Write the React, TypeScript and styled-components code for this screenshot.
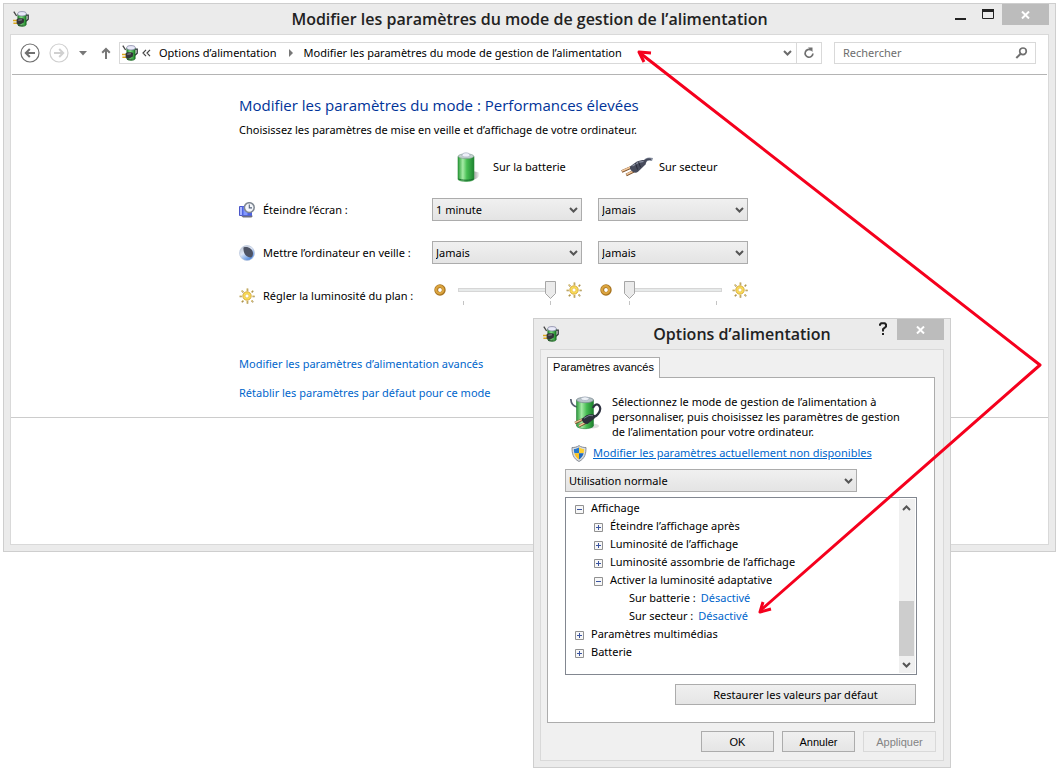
import React, { useId, useState } from 'react';
import styled, { createGlobalStyle, css } from 'styled-components';

const uiFont = '"Noto Sans", "Open Sans", sans-serif';
const titleFont = '"Open Sans", "Noto Sans", sans-serif';
const dialogFont = '"Liberation Sans", Arial, sans-serif';

const GlobalStyle = createGlobalStyle`
  *, *::before, *::after { box-sizing: border-box; }
  body {
    margin: 0;
    background: #fff;
    color: #000;
    font-family: ${uiFont};
    font-size: 11px;
    line-height: 18px;
  }
  button, input, select { font: inherit; color: inherit; margin: 0; border-radius: 0; }
  h1, h2, p, ul { margin: 0; padding: 0; }
  ul { list-style: none; }
  svg { display: block; flex: none; }
`;

/* ---------- Window frame ---------- */

const Desktop = styled.div`
  position: relative;
  min-height: 100vh;
  padding: 3px 2px 3px 3px;
`;

const frame = css`
  display: flex;
  flex-direction: column;
  padding: 0 6px 6px;
  border: 1px solid #cecece;
  background: #ebebeb;
`;

const MainWindow = styled.main`
  ${frame}
`;

const DialogWindow = styled.section`
  ${frame}
  position: absolute;
  left: 533px;
  top: 318px;
  width: 418px;
`;

const TitleBar = styled.header`
  display: grid;
  grid-template-columns: 1fr auto 1fr;
  height: 30px;
`;

const TitleIcon = styled.span`
  padding: 7px 0 0 3px;
`;

const WindowTitle = styled.h1`
  color: #222;
  font-family: ${titleFont};
  font-size: 16px;
  font-weight: 600;
  line-height: 30px;
  white-space: nowrap;
`;

const Controls = styled.div`
  display: flex;
  justify-content: flex-end;
  align-items: flex-start;
`;

const ControlButton = styled.button<{ $width?: number; $close?: boolean }>`
  display: flex;
  align-items: center;
  justify-content: center;
  width: ${(p) => p.$width ?? 28}px;
  height: ${(p) => (p.$close ? 21 : 19)}px;
  padding: 0;
  border: 0;
  background: ${(p) => (p.$close ? '#bcbcbc' : 'transparent')};
`;

const Client = styled.div<{ $tinted?: boolean }>`
  border: 1px solid #d9d9d9;
  background: ${(p) => (p.$tinted ? '#f0f0f0' : '#fff')};
`;

/* ---------- Navigation bar ---------- */

const Toolbar = styled.nav`
  display: flex;
  align-items: center;
  margin: 0 1px;
  padding: 7px 11px 10px 8px;
  border-bottom: 1px solid #b4b4b4;
`;

const IconButton = styled.button<{ $width?: number }>`
  display: flex;
  flex: none;
  align-items: center;
  justify-content: center;
  width: ${(p) => p.$width ?? 20}px;
  height: 20px;
  padding: 0;
  border: 0;
  background: none;
`;

const HistoryButtons = styled.div`
  display: flex;
  gap: 9px;
`;

const NavMenu = styled.div`
  display: flex;
  gap: 3px;
  margin: 0 3px 0 4px;
`;

const AddressBar = styled.div`
  display: flex;
  flex: 1;
  align-items: center;
  min-width: 0;
  height: 22px;
  border: 1px solid #d9d9d9;
  padding-left: 2px;
`;

const Crumbs = styled.div`
  display: flex;
  flex: 1;
  align-items: center;
  gap: 8px;
  min-width: 0;
  padding-left: 4px;
  overflow: hidden;
  white-space: nowrap;
`;

const Crumb = styled.a`
  color: #000;
  text-decoration: none;
`;

const CrumbSeparator = styled.span`
  padding: 0 2px;
`;

const RefreshCell = styled.div`
  display: flex;
  align-items: center;
  height: 20px;
  border-left: 1px solid #d9d9d9;
`;

const SearchBox = styled.label`
  display: flex;
  align-items: center;
  width: 202px;
  height: 22px;
  margin-left: 12px;
  padding: 0 7px 0 8px;
  border: 1px solid #d9d9d9;
`;

const SearchInput = styled.input`
  flex: 1;
  min-width: 0;
  padding: 0;
  border: 0;
  outline: 0;
  background: none;
  &::placeholder { color: #6d6d6d; opacity: 1; }
`;

/* ---------- Power plan page ---------- */

const Page = styled.div`
  padding: 18px 16px 14px 228px;
  border-bottom: 1px solid #ccc;
`;

const PageBottom = styled.div`
  height: 126px;
`;

const Heading = styled.h2`
  color: #003399;
  font-family: ${titleFont};
  font-size: 15px;
  font-weight: 400;
  line-height: 24px;
`;

const Intro = styled.p`
  margin-top: 3px;
  line-height: 20px;
`;

const Settings = styled.div`
  display: grid;
  grid-template-columns: 177px 150px 150px;
  grid-template-rows: 42px;
  grid-auto-rows: 43px;
  column-gap: 16px;
  align-items: center;
  margin-top: 6px;
`;

const SourceHead = styled.div`
  display: flex;
  align-items: center;
  gap: 6px;
  padding-left: 23px;
`;

const SettingLabel = styled.div`
  display: flex;
  align-items: center;
  gap: 8px;
  white-space: nowrap;
`;

const LinkList = styled.div`
  display: flex;
  flex-direction: column;
  align-items: flex-start;
  gap: 9px;
  margin-top: 37px;
`;

const Link = styled.a<{ $underlined?: boolean }>`
  color: #0066cc;
  line-height: 20px;
  text-decoration: ${(p) => (p.$underlined ? 'underline' : 'none')};
`;

/* ---------- Form controls ---------- */

const SelectBox = styled.div<{ $width: number }>`
  display: grid;
  grid-template-columns: 1fr 17px;
  align-items: center;
  width: ${(p) => p.$width}px;
  height: 23px;
  border: 1px solid #acacac;
  background: linear-gradient(#f0f0f0, #e4e4e4);
  svg { grid-area: 1 / 2; pointer-events: none; z-index: 1; margin-left: 5px; }
`;

const NativeSelect = styled.select`
  grid-area: 1 / 1 / 2 / 3;
  height: 21px;
  padding: 0 18px 0 3px;
  border: 0;
  background: none;
  appearance: none;
`;

const PushButton = styled.button<{ $width: number; $classic?: boolean }>`
  width: ${(p) => p.$width}px;
  height: 21px;
  padding: 0;
  border: 1px solid #acacac;
  background: linear-gradient(#f0f0f0, #e5e5e5);
  font-family: ${(p) => (p.$classic ? dialogFont : uiFont)};
  line-height: 18px;
  &:disabled {
    border-color: #d9d9d9;
    background: #efefef;
    color: #838383;
  }
`;

const SliderCell = styled.div`
  display: flex;
  align-items: flex-start;
  align-self: start;
  padding: 7px 0 0 2px;
`;

const SliderMark = styled.span<{ $end?: boolean }>`
  padding-top: ${(p) => (p.$end ? 1 : 3)}px;
`;

const SliderBody = styled.div`
  position: relative;
  width: 98px;
  height: 24px;
  margin: 0 10px 0 12px;
`;

const Range = styled.input`
  display: block;
  width: 100%;
  height: 18px;
  background: none;
  appearance: none;
  &::-webkit-slider-runnable-track {
    height: 4px;
    border: 1px solid #d6d6d6;
    background: #e7eaea;
  }
  &::-webkit-slider-thumb {
    appearance: none;
    width: 11px;
    height: 18px;
    margin-top: -8px;
    opacity: 0;
  }
`;

const Thumb = styled.svg`
  position: absolute;
  top: 0;
  pointer-events: none;
`;

const Ticks = styled.div`
  display: flex;
  height: 4px;
  margin: 2px 5px 0;
  border: solid #c4c4c4;
  border-width: 0 1px;
`;

/* ---------- Dialog ---------- */

const DialogClient = styled(Client)`
  padding: 7px 7px 8px 6px;
`;

const Tab = styled.button`
  position: relative;
  display: block;
  width: 113px;
  height: 21px;
  margin-bottom: -1px;
  padding: 0 0 2px;
  border: 1px solid #acacac;
  border-bottom: 0;
  background: #fff;
  font-family: ${dialogFont};
`;

const TabPanel = styled.div`
  display: flex;
  flex-direction: column;
  margin-right: 1px;
  padding: 16px 17px 17px;
  border: 1px solid #acacac;
  background: #fff;
`;

const Summary = styled.div`
  display: flex;
  gap: 10px;
  padding-left: 5px;
  line-height: 15px;
  white-space: nowrap;
`;

const UnlockRow = styled.div`
  display: flex;
  align-items: center;
  gap: 6px;
  height: 18px;
  margin: 5px 0 7px;
  padding-left: 6px;
`;

const TreeBox = styled.div`
  display: flex;
  height: 178px;
  margin-top: 5px;
  padding: 1px;
  border: 1px solid #828790;
`;

const Tree = styled.ul`
  flex: 1;
`;

const TreeRow = styled.li<{ $level: number }>`
  display: flex;
  align-items: center;
  height: 18px;
  padding-left: ${(p) => 8 + p.$level * 19}px;
  white-space: nowrap;
`;

const ExpandSlot = styled.span`
  width: 16px;
  padding-top: 2px;
`;

const Expander = styled.button`
  display: block;
  padding: 0;
  border: 0;
  background: none;
`;

const Value = styled.a`
  margin-left: 5px;
  color: #0066cc;
  text-decoration: none;
`;

const ScrollBar = styled.div`
  display: flex;
  flex-direction: column;
  width: 16px;
  background: #f0f0f0;
`;

const ScrollThumb = styled.div`
  width: 15px;
  height: 55px;
  margin-top: auto;
  background: #cdcdcd;
`;

const ScrollButton = styled.button`
  display: flex;
  align-items: center;
  justify-content: center;
  width: 15px;
  height: 17px;
  padding: 0;
  border: 0;
  background: none;
`;

const RestoreRow = styled.div`
  display: flex;
  justify-content: flex-end;
  margin-top: 9px;
  padding-right: 1px;
`;

const DialogButtons = styled.div`
  display: flex;
  justify-content: flex-end;
  gap: 8px;
  margin-top: 8px;
`;

const Annotations = styled.svg`
  position: absolute;
  inset: 0;
  width: 100%;
  height: 100%;
  pointer-events: none;
`;

/* ---------- Icons ---------- */

const PowerSmall = () => {
  const id = useId();
  return (
    <svg width="16" height="16" viewBox="0 0 16 16" aria-hidden="true">
      <defs>
        <linearGradient id={id}>
          <stop offset="0" stopColor="#1f8f2c" />
          <stop offset=".4" stopColor="#7fe07f" />
          <stop offset="1" stopColor="#137a1f" />
        </linearGradient>
      </defs>
      <path d="M.8.6 3.6 5" stroke="#444" strokeWidth="1.3" fill="none" />
      <path d="M13 4.200h2.200v4l-2.200 2" stroke="#2f3338" strokeWidth="1.3" fill="none" />
      <path d="M4.800 3v10.800c1 2.200 7.400 2.200 8.400 0V3z" fill={`url(#${id})`} stroke="#1b5e24" strokeWidth=".6" />
      <ellipse cx="9" cy="2.800" rx="4.300" ry="2.200" fill="#e8e9f8" stroke="#77799a" strokeWidth=".7" />
      <path d="M0 9.500h4.500M.4 12.300h4.400" stroke="#dba81c" strokeWidth="1.6" />
      <path d="M3.600 8.300 5.600 7.200l3.800.1 1.800.8-.4 3.400-2.600 1.600-2.200.7-2.400-1.200z" fill="#33353a" />
      <path d="M5.300 9.200l3.600-.4" stroke="#8d9096" strokeWidth="1" />
      <path d="M5 14.400l5.500-.200" stroke="#24402a" strokeWidth=".8" />
    </svg>
  );
};

const PowerLarge = () => {
  const id = useId();
  return (
    <svg width="32" height="36" viewBox="0 0 32 36" aria-hidden="true">
      <defs>
        <linearGradient id={id}>
          <stop offset="0" stopColor="#2c9a3b" />
          <stop offset=".3" stopColor="#a5eaa5" />
          <stop offset=".6" stopColor="#45bb52" />
          <stop offset="1" stopColor="#1c7e2b" />
        </linearGradient>
      </defs>
      <ellipse cx="22" cy="32" rx="7" ry="2.6" fill="#ddd" />
      <path d="M.8 5C1 9 3 12 7 13" stroke="#565d6e" strokeWidth="1.7" fill="none" />
      <path d="M6.5 6v26c2 3.6 15 3.6 17 0V6z" fill={`url(#${id})`} stroke="#26803a" strokeWidth=".6" />
      <ellipse cx="15" cy="6" rx="8.5" ry="2.7" fill="#b9c5c9" stroke="#7b8a90" strokeWidth=".7" />
      <ellipse cx="15" cy="4.7" rx="4" ry="1.8" fill="#eef2f7" stroke="#929db0" strokeWidth=".5" />
      <path d="M23 14c1-3 4-5 6-2.5s1 6-1 8.5-3 2.5-5 3.5" stroke="#2e3240" strokeWidth="2.2" fill="none" />
      <path d="m5 29 8-3.6M9 32.2l7-3.6" stroke="#7d5530" strokeWidth="2.6" />
      <path d="m5 28.600 8-3.600M9 31.800l7-3.600" stroke="#f1c99c" strokeWidth="1.3" />
      <path d="m11.500 25 5-3.800c2.500-1.200 6-1.300 8.500-.3l-.5 3.500-7 5.700c-3 .2-5-2-6-5.100z" fill="#2b2f3a" />
      <path d="m14 24.300 5-2.800 4 .2" stroke="#747b8c" strokeWidth="1" fill="none" />
    </svg>
  );
};

const BatteryIcon = () => {
  const id = useId();
  return (
    <svg width="32" height="32" viewBox="-1 0 32 32" aria-hidden="true">
      <defs>
        <linearGradient id={id}>
          <stop offset="0" stopColor="#2a9c38" />
          <stop offset=".3" stopColor="#a6eca6" />
          <stop offset=".55" stopColor="#48bf54" />
          <stop offset="1" stopColor="#1d8330" />
        </linearGradient>
        <linearGradient id={`${id}s`}>
          <stop offset=".4" stopColor="#bbb" />
          <stop offset="1" stopColor="#fff" />
        </linearGradient>
      </defs>
      <path d="m17 20 6 1.500c2 2-.5 6-6 7.500z" fill={`url(#${id}s)`} />
      <path d="M2 5.500v23c2 2.600 14 2.600 16 0v-23z" fill={`url(#${id})`} stroke="#2b8a3a" strokeWidth=".6" />
      <ellipse cx="10" cy="5.2" rx="7.800" ry="2.4" fill="#c4d3cf" stroke="#7f9891" strokeWidth=".6" />
      <path d="M6 4.500c0-3.600 8-3.600 8 0 0 2-8 2-8 0z" fill="#eef0f8" stroke="#98a1b5" strokeWidth=".6" />
      <path d="M2.500 28c3 1.600 12 1.600 15 0" stroke="#15692a" fill="none" />
    </svg>
  );
};

const PlugIcon = () => (
  <svg width="32" height="20" viewBox="0 0 32 20" aria-hidden="true">
    <path d="M31.500 2.500c-4-1.500-6.500-.5-9 3" stroke="#8b93a3" strokeWidth="3" fill="none" />
    <path d="M30 2.500c-3-1-5.500 0-7.500 3" stroke="#454a5c" strokeWidth="1.6" fill="none" />
    <path d="m.8 14.500 9-4M5.200 18l8-4" stroke="#7a4f2a" strokeWidth="2.8" />
    <path d="m1 14 9-4M5.400 17.500l8-4" stroke="#f2c89c" strokeWidth="1.4" />
    <path d="m9 9.500 6.500-4.800C19 3 23 2.500 26 3.200l-1.500 4.300-7.500 7.200c-1.500 1.200-3 1.200-4.500.5C10 14 8.500 12 9 9.500z" fill="#474b5b" />
    <path d="m11.500 9 6-3.600 5-1" stroke="#8b90a2" strokeWidth="1.2" fill="none" />
    <path d="m14.500 6 2 6.500M17.500 4.700l2 5.500" stroke="#1f2230" strokeWidth=".8" />
  </svg>
);

const ScreenClockIcon = () => (
  <svg width="16" height="16" viewBox="0 0 16 16" aria-hidden="true">
    <path d="M.5 4.500h4v9h-4z" fill="#a9b6ff" stroke="#4a55c8" />
    <path d="M3 4h10v10H3z" fill="#4f63e0" />
    <path d="M2 13.800h12l-1.500 1.700H4z" fill="#6d6f80" />
    <path d="M4.500 5h4v8h-4z" fill="#8298ff" />
    <circle cx="10.300" cy="5.600" r="4.900" fill="#f4f6fa" stroke="#7f8791" strokeWidth="1.5" />
    <path d="M10.300 2.600v3.300h2.700" stroke="#56647c" strokeWidth="1.1" fill="none" />
  </svg>
);

const MoonIcon = () => {
  const id = useId();
  return (
    <svg width="16" height="16" viewBox="0 0 16 16" aria-hidden="true">
      <defs>
        <linearGradient id={id} x1="0" y1="0" x2=".6" y2="1">
          <stop offset="0" stopColor="#b4b9c4" />
          <stop offset=".5" stopColor="#dfe8f8" />
          <stop offset="1" stopColor="#4c87e0" />
        </linearGradient>
      </defs>
      <circle cx="8" cy="8" r="7.5" fill={`url(#${id})`} stroke="#b9c6dc" strokeWidth=".7" />
      <path d="M4.500 2.500C9 1 13.500 4 14 8c.1 2.300-.8 4-2 4.500C7 12.500 4 8 4.500 2.500z" fill="#4d5365" />
    </svg>
  );
};

const SunIcon = () => (
  <svg width="16" height="16" viewBox="0 0 16 16" aria-hidden="true">
    <path
      d="M8.500.5v2.700M8.500 13v2.700M.6 8.500h2.200M13.500 8.500h2.200M2.800 2.800l1.600 1.600M12.600 12.600l1.600 1.600M2.800 14.200l1.600-1.600M12.600 4.400l1.600-1.600"
      stroke="#a08a55"
      strokeWidth="1.6"
    />
    <path
      d="M8 .5v2.500M8 13v2.500M.6 8h2M13.400 8h2M2.400 2.400l1.700 1.700M12 12l1.800 1.800M2.400 13.800l1.700-1.700M12 4.200l1.800-1.800"
      stroke="#f3d878"
      strokeWidth=".8"
    />
    <circle cx="8" cy="8" r="4.2" fill="#fbdf5a" stroke="#d3a436" strokeWidth=".9" />
    <circle cx="8" cy="8" r="2" fill="#fff" stroke="#e5b93a" strokeWidth=".7" />
  </svg>
);

const DimIcon = () => (
  <svg width="12" height="12" viewBox="0 0 12 12" aria-hidden="true">
    <circle cx="6" cy="6" r="3.8" fill="#fff" stroke="#a87420" strokeWidth="3.8" />
    <circle cx="5.700" cy="5.700" r="3.6" fill="none" stroke="#dca53f" strokeWidth="2.2" />
  </svg>
);

const ShieldIcon = () => (
  <svg width="16" height="17" viewBox="0 0 16 17" aria-hidden="true">
    <path d="M8 .6C6 2 3.500 2.600 1 2.500c0 6 1 11 7 14 6-3 7-8 7-14C12.500 2.600 10 2 8 .6z" fill="#d9dce0" stroke="#7f858e" strokeWidth=".9" />
    <path d="M8 2.500C6.500 3.400 4.700 4 2.900 4c0 1.600.1 3 .5 4.300H8z" fill="#2478cf" />
    <path d="M8 2.500c1.500.9 3.300 1.500 5.100 1.500 0 1.600-.1 3-.5 4.300H8z" fill="#ffd02e" />
    <path d="M8 8.300H3.400c.7 2.700 2.100 4.800 4.600 6.200z" fill="#fbc31f" />
    <path d="M8 8.300h4.600c-.7 2.700-2.100 4.800-4.600 6.200z" fill="#2169bd" />
  </svg>
);

const Chevron = ({ up = false, color = '#555' }: { up?: boolean; color?: string }) => (
  <svg width="9" height="6" viewBox="0 0 9 6" aria-hidden="true">
    <path d={up ? 'M1 5l3.500-3.500L8 5' : 'M1 1l3.500 3.500L8 1'} fill="none" stroke={color} strokeWidth="2" />
  </svg>
);

const CloseGlyph = () => (
  <svg width="9" height="8" viewBox="0 0 9 8" aria-hidden="true">
    <path d="M1 .5l7 7M8 .5l-7 7" stroke="#fff" strokeWidth="2" />
  </svg>
);

const HistoryGlyph = ({ color, forward = false }: { color: string; forward?: boolean }) => (
  <svg width="20" height="20" viewBox="0 0 20 20" aria-hidden="true">
    <circle cx="10" cy="10" r="9" fill="none" stroke={color} strokeWidth="1.2" />
    <path
      d={forward ? 'M5 10h9M10.200 6l4 4-4 4' : 'M15 10H6M9.800 6l-4 4 4 4'}
      fill="none"
      stroke={color}
      strokeWidth="2"
    />
  </svg>
);

/* ---------- Composite controls ---------- */

const Select = ({ label, width = 150, options }: { label: string; width?: number; options: string[] }) => (
  <SelectBox $width={width}>
    <NativeSelect aria-label={label}>
      {options.map((o) => (
        <option key={o}>{o}</option>
      ))}
    </NativeSelect>
    <Chevron />
  </SelectBox>
);

const Slider = ({ label, initial }: { label: string; initial: number }) => {
  const [value, setValue] = useState(initial);
  return (
    <SliderCell>
      <SliderMark><DimIcon /></SliderMark>
      <SliderBody>
        <Range
          type="range"
          aria-label={label}
          min={0}
          max={100}
          value={value}
          onChange={(e) => setValue(Number(e.target.value))}
        />
        <Thumb width="11" height="18" viewBox="0 0 11 18" style={{ left: Math.round(value * 0.87) }}>
          <path d="M.5.5h10v12l-5 5-5-5z" fill="#ebebeb" stroke="#a6a6a6" />
        </Thumb>
        <Ticks />
      </SliderBody>
      <SliderMark $end><SunIcon /></SliderMark>
    </SliderCell>
  );
};

type Node = { level: number; text: string; open?: boolean; value?: string };

const nodes: Node[] = [
  { level: 0, text: 'Affichage', open: true },
  { level: 1, text: 'Éteindre l’affichage après', open: false },
  { level: 1, text: 'Luminosité de l’affichage', open: false },
  { level: 1, text: 'Luminosité assombrie de l’affichage', open: false },
  { level: 1, text: 'Activer la luminosité adaptative', open: true },
  { level: 2, text: 'Sur batterie :', value: 'Désactivé' },
  { level: 2, text: 'Sur secteur :', value: 'Désactivé' },
  { level: 0, text: 'Paramètres multimédias', open: false },
  { level: 0, text: 'Batterie', open: false },
];

const TreeItem = ({ node }: { node: Node }) => (
  <TreeRow $level={node.level}>
    <ExpandSlot>
      {node.open !== undefined && (
        <Expander aria-label={node.text} aria-expanded={node.open}>
          <svg width="9" height="9" viewBox="0 0 9 9" aria-hidden="true">
            <path d="M.5.5h8v8h-8z" fill="#f7f7f7" stroke="#919191" />
            <path d={node.open ? 'M2 4.500h5' : 'M2 4.500h5M4.500 2v5'} stroke="#3a54a0" />
          </svg>
        </Expander>
      )}
    </ExpandSlot>
    {node.text}
    {node.value && <Value href="#">{node.value}</Value>}
  </TreeRow>
);

export default function App() {
  return (
    <Desktop>
      <GlobalStyle />
      <MainWindow>
        <TitleBar>
          <TitleIcon><PowerSmall /></TitleIcon>
          <WindowTitle>Modifier les paramètres du mode de gestion de l’alimentation</WindowTitle>
          <Controls>
            <ControlButton aria-label="Réduire">
              <svg width="12" height="16" viewBox="0 0 12 16"><path d="M1 13h11" stroke="#222" strokeWidth="2" /></svg>
            </ControlButton>
            <ControlButton aria-label="Agrandir">
              <svg width="12" height="10" viewBox="0 0 12 10"><path d="M.5.5h11v9H.5z" fill="none" stroke="#222" /><path d="M0 0h12v3H0z" fill="#222" /></svg>
            </ControlButton>
            <ControlButton aria-label="Fermer" $width={47} $close><CloseGlyph /></ControlButton>
          </Controls>
        </TitleBar>
        <Client>
          <Toolbar>
            <HistoryButtons>
              <IconButton aria-label="Précédent"><HistoryGlyph color="#707070" /></IconButton>
              <IconButton aria-label="Suivant"><HistoryGlyph color="#d0d0d0" forward /></IconButton>
            </HistoryButtons>
            <NavMenu>
              <IconButton aria-label="Pages récentes">
                <svg width="8" height="5" viewBox="0 0 8 5"><path d="M0 0h8L4 4.500z" fill="#777" /></svg>
              </IconButton>
              <IconButton aria-label="Dossier parent">
                <svg width="10" height="12" viewBox="0 0 10 12"><path d="M5 12V2M1.200 5.800 5 2l3.800 3.800" fill="none" stroke="#777" strokeWidth="2" /></svg>
              </IconButton>
            </NavMenu>
            <AddressBar>
              <PowerSmall />
              <Crumbs>
                <svg width="9" height="8" viewBox="0 0 9 8"><path d="M4 .8 1 4l3 3.200M8 .8 5 4l3 3.200" fill="none" stroke="#444" strokeWidth="1.2" /></svg>
                <Crumb href="#">Options d’alimentation</Crumb>
                <CrumbSeparator>
                  <svg width="7" height="8" viewBox="0 0 7 8"><path d="M2 0v8l4-4z" fill="#777" /></svg>
                </CrumbSeparator>
                <Crumb href="#">Modifier les paramètres du mode de gestion de l’alimentation</Crumb>
              </Crumbs>
              <IconButton aria-label="Emplacements précédents" $width={18}><Chevron color="#6b6b6b" /></IconButton>
              <RefreshCell>
                <IconButton aria-label="Actualiser" $width={24}>
                  <svg width="12" height="12" viewBox="0 0 12 12">
                    <path d="M8 3A3.900 3.900 0 1 0 9.900 6.500" fill="none" stroke="#707070" strokeWidth="1.7" />
                    <path d="M5 .5h4.500V5z" fill="#707070" />
                  </svg>
                </IconButton>
              </RefreshCell>
            </AddressBar>
            <SearchBox>
              <SearchInput type="text" placeholder="Rechercher" aria-label="Rechercher" />
              <svg width="13" height="12" viewBox="0 0 13 12">
                <circle cx="8" cy="4.3" r="3.3" fill="none" stroke="#707070" strokeWidth="1.7" />
                <path d="M5.600 6.700 1.300 11" stroke="#707070" strokeWidth="2" />
              </svg>
            </SearchBox>
          </Toolbar>

          <Page>
            <Heading>Modifier les paramètres du mode : Performances élevées</Heading>
            <Intro>Choisissez les paramètres de mise en veille et d’affichage de votre ordinateur.</Intro>
            <Settings>
              <span />
              <SourceHead><BatteryIcon />Sur la batterie</SourceHead>
              <SourceHead><PlugIcon />Sur secteur</SourceHead>

              <SettingLabel><ScreenClockIcon />Éteindre l’écran :</SettingLabel>
              <Select label="Éteindre l’écran, sur la batterie" options={['1 minute', 'Jamais']} />
              <Select label="Éteindre l’écran, sur secteur" options={['Jamais', '1 minute']} />

              <SettingLabel><MoonIcon />Mettre l’ordinateur en veille :</SettingLabel>
              <Select label="Mettre en veille, sur la batterie" options={['Jamais', '1 minute']} />
              <Select label="Mettre en veille, sur secteur" options={['Jamais', '1 minute']} />

              <SettingLabel><SunIcon />Régler la luminosité du plan :</SettingLabel>
              <Slider label="Luminosité, sur la batterie" initial={100} />
              <Slider label="Luminosité, sur secteur" initial={0} />
            </Settings>
            <LinkList>
              <Link href="#">Modifier les paramètres d’alimentation avancés</Link>
              <Link href="#">Rétablir les paramètres par défaut pour ce mode</Link>
            </LinkList>
          </Page>
          <PageBottom />
        </Client>
      </MainWindow>

      <DialogWindow role="dialog" aria-label="Options d’alimentation">
        <TitleBar>
          <TitleIcon><PowerSmall /></TitleIcon>
          <WindowTitle>Options d’alimentation</WindowTitle>
          <Controls>
            <ControlButton aria-label="Aide">
              <svg width="9" height="13" viewBox="0 0 9 13">
                <path d="M1 3.800V2.500L2.200 1.200h3.600L7 2.500v2L4 7.200V9.500" fill="none" stroke="#222" strokeWidth="2" />
                <path d="M3 11h2v2H3z" fill="#222" />
              </svg>
            </ControlButton>
            <ControlButton aria-label="Fermer" $width={47} $close><CloseGlyph /></ControlButton>
          </Controls>
        </TitleBar>
        <DialogClient $tinted>
          <Tab role="tab" aria-selected="true">Paramètres avancés</Tab>
          <TabPanel>
            <Summary>
              <PowerLarge />
              <p>
                Sélectionnez le mode de gestion de l’alimentation à<br />
                personnaliser, puis choisissez les paramètres de gestion<br />
                de l’alimentation pour votre ordinateur.
              </p>
            </Summary>
            <UnlockRow>
              <ShieldIcon />
              <Link href="#" $underlined>Modifier les paramètres actuellement non disponibles</Link>
            </UnlockRow>
            <Select label="Mode de gestion" width={292} options={['Utilisation normale', 'Performances élevées']} />
            <TreeBox>
              <Tree>
                {nodes.map((n) => (
                  <TreeItem key={n.text} node={n} />
                ))}
              </Tree>
              <ScrollBar>
                <ScrollButton aria-label="Défiler vers le haut"><Chevron up /></ScrollButton>
                <ScrollThumb />
                <ScrollButton aria-label="Défiler vers le bas"><Chevron /></ScrollButton>
              </ScrollBar>
            </TreeBox>
            <RestoreRow>
              <PushButton $width={241}>Restaurer les valeurs par défaut</PushButton>
            </RestoreRow>
          </TabPanel>
          <DialogButtons>
            <PushButton $width={73} $classic>OK</PushButton>
            <PushButton $width={73} $classic>Annuler</PushButton>
            <PushButton $width={73} $classic disabled>Appliquer</PushButton>
          </DialogButtons>
        </DialogClient>
      </DialogWindow>

      <Annotations aria-hidden="true">
        <g fill="none" stroke="#f5001d" strokeWidth="3" strokeLinejoin="round">
          <path d="M640 53 1040 365 761 610" />
          <path d="M651 53 639 52 644 62" />
          <path d="M763 602 760 612 771 609" />
        </g>
      </Annotations>
    </Desktop>
  );
}
